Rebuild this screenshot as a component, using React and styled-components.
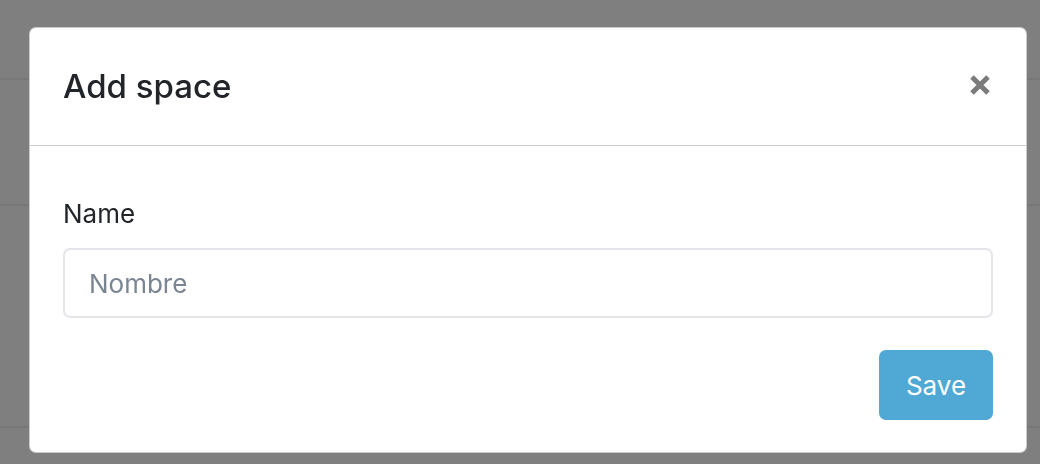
import styled, { createGlobalStyle } from "styled-components";

const GlobalStyle = createGlobalStyle`
  html, body {
    margin: 0;
    padding: 0;
    background: #fff;
    font-family: Inter, "Noto Sans", "Liberation Sans", sans-serif;
    color: #212529;
  }
  * { box-sizing: border-box; }
`;

export default function App() {
  return (
    <>
      <GlobalStyle />
      <Page>
        <PageBar />
        <PageRow $height={126} />
        <PageRow $height={222} />
      </Page>
      <Backdrop>
        <Dialog>
          <Header>
            <Title>Add space</Title>
            <CloseButton aria-label="Close">
              <svg width="22" height="22" viewBox="0 0 22 22">
                <path
                  d="M3 3 L19 19 M19 3 L3 19"
                  stroke="#7b7b7b"
                  strokeWidth="5"
                  strokeLinecap="butt"
                />
              </svg>
            </CloseButton>
          </Header>
          <Body>
            <Label htmlFor="space-name">Name</Label>
            <Input id="space-name" placeholder="Nombre" type="text" />
            <Footer>
              <SaveButton>Save</SaveButton>
            </Footer>
          </Body>
        </Dialog>
      </Backdrop>
    </>
  );
}

const Page = styled.div`
  width: 100vw;
  height: 100vh;
  overflow: hidden;
`;

const PageBar = styled.div`
  height: 80px;
  border-bottom: 2px solid #eeeeee;
`;

const PageRow = styled.div`
  height: ${({ $height }) => $height}px;
  border-bottom: 2px solid #eeeeee;
`;

const Backdrop = styled.div`
  position: fixed;
  inset: 0;
  background: rgba(0, 0, 0, 0.5);
  padding: 27px 13px 0 29px;
`;

const Dialog = styled.div`
  width: 998px;
  background: #fff;
  border: 1px solid rgba(0, 0, 0, 0.2);
  border-radius: 7px;
  overflow: hidden;
`;

const Header = styled.div`
  height: 118px;
  display: flex;
  align-items: center;
  justify-content: space-between;
  padding: 0 35px 0 33px;
  border-bottom: 1px solid #c8ccd0;
`;

const Title = styled.h5`
  margin: 0;
  font-size: 33px;
  font-weight: 500;
  line-height: 1.5;
  color: #212529;
`;

const CloseButton = styled.button`
  border: none;
  background: none;
  padding: 0;
  width: 22px;
  height: 22px;
  display: flex;
  margin-top: -3px;
  cursor: pointer;
`;

const Body = styled.div`
  display: flex;
  flex-direction: column;
  padding: 48px 33px 32px;
`;

const Label = styled.label`
  font-size: 26px;
  line-height: 39px;
  margin-bottom: 15px;
  color: #212529;
`;

const Input = styled.input`
  height: 70px;
  width: 100%;
  border: 2px solid #e3e5e8;
  border-radius: 7px;
  padding: 0 24px;
  font-family: inherit;
  font-size: 26px;
  color: #212529;
  outline: none;

  &::placeholder {
    color: #7a8591;
  }
`;

const Footer = styled.div`
  display: flex;
  justify-content: flex-end;
  margin-top: 32px;
`;

const SaveButton = styled.button`
  width: 114px;
  height: 70px;
  border: none;
  border-radius: 7px;
  background: #50a8d5;
  color: #fff;
  font-family: inherit;
  font-size: 26px;
  cursor: pointer;
`;
